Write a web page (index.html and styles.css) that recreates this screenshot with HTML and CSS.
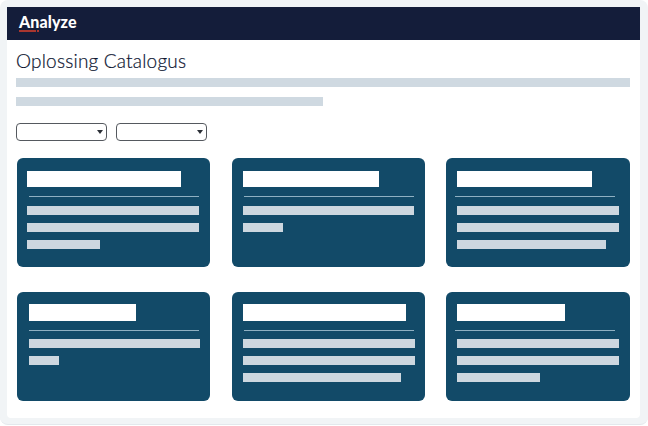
FILE: index.html
```html
<!DOCTYPE html>
<html>
<head>
    <title>Analyze - Oplossing Catalogus</title>
    <link rel="stylesheet" href="styles.css">
</head>
<body>
    <div class="frame">
        <div class="window">
            <div class="topbar">
                <div class="logo">Analyze</div>
                <div class="logo-mark"></div>
            </div>
            <div class="content">
                <h1>Oplossing Catalogus</h1>
                <div class="intro-bar"></div>
                <div class="intro-bar short"></div>
                <div class="filters">
                    <div class="select"></div>
                    <div class="select"></div>
                </div>
                <div class="cards">
                    <div class="card">
                        <div class="card-title" style="width: 154px"></div>
                        <div class="card-line"></div>
                        <div class="bar" style="width: 172px"></div>
                        <div class="bar" style="width: 172px"></div>
                        <div class="bar" style="width: 73px"></div>
                    </div>
                    <div class="card">
                        <div class="card-title" style="width: 136px"></div>
                        <div class="card-line"></div>
                        <div class="bar" style="width: 171px"></div>
                        <div class="bar" style="width: 40px"></div>
                    </div>
                    <div class="card">
                        <div class="card-title" style="width: 135px"></div>
                        <div class="card-line"></div>
                        <div class="bar" style="width: 162px"></div>
                        <div class="bar" style="width: 162px"></div>
                        <div class="bar" style="width: 149px"></div>
                    </div>
                    <div class="card">
                        <div class="card-title" style="width: 107px"></div>
                        <div class="card-line"></div>
                        <div class="bar" style="width: 171px"></div>
                        <div class="bar" style="width: 30px"></div>
                    </div>
                    <div class="card">
                        <div class="card-title" style="width: 163px"></div>
                        <div class="card-line"></div>
                        <div class="bar" style="width: 172px"></div>
                        <div class="bar" style="width: 172px"></div>
                        <div class="bar" style="width: 158px"></div>
                    </div>
                    <div class="card">
                        <div class="card-title" style="width: 108px"></div>
                        <div class="card-line"></div>
                        <div class="bar" style="width: 162px"></div>
                        <div class="bar" style="width: 162px"></div>
                        <div class="bar" style="width: 83px"></div>
                    </div>
                </div>
            </div>
        </div>
    </div>
</body>
</html>
```

FILE: styles.css
```css
body {
    margin: 0;
    background-color: white;
    font-family: "Lato", "Liberation Sans", sans-serif;
}
.frame {
    width: 648px;
    height: 425px;
    box-sizing: border-box;
    padding: 7px 8px 6px 7px;
    background-color: #f1f4f6;
    border-bottom: 1px solid #e3e8ec;
    border-radius: 8px;
}
.window {
    height: 100%;
    background-color: white;
    border-radius: 0 0 4px 4px;
    overflow: hidden;
}
.topbar {
    height: 33px;
    background-color: #141d3a;
    padding: 6px 0 0 12px;
    box-sizing: border-box;
}
.logo {
    color: white;
    font-size: 16px;
    font-weight: 900;
    letter-spacing: 0.1px;
    line-height: 17px;
}
.logo-mark {
    width: 20px;
    height: 2px;
    background: linear-gradient(to right, #a8362f 17px, transparent 17px, transparent 18px, #a8362f 18px);
}
.content {
    padding: 0 10px 0 9px;
}
h1 {
    margin: 0;
    padding-top: 8px;
    height: 30px;
    color: #0c1430;
    font-size: 19px;
    font-weight: 300;
    letter-spacing: 0.2px;
    line-height: 25px;
    -webkit-text-stroke: 0.2px #0c1430;
}
.intro-bar {
    height: 9px;
    margin-bottom: 10px;
    background-color: #cfd9e1;
    width: 614px;
}
.intro-bar.short {
    width: 307px;
}
.filters {
    display: flex;
    gap: 9px;
    margin-top: 17px;
}
.select {
    position: relative;
    width: 91px;
    height: 18px;
    box-sizing: border-box;
    border: 1px solid #55595f;
    border-radius: 4px;
}
.select::after {
    content: "";
    position: absolute;
    right: 3px;
    top: 6px;
    border-style: solid;
    border-width: 4px 3px 0 3px;
    border-color: #2b2f36 transparent transparent transparent;
}
.cards {
    display: grid;
    grid-template-columns: 215px 214px 184px;
    grid-auto-rows: 109px;
    row-gap: 25px;
    margin: 17px 0 0 1px;
}
.card {
    width: 193px;
    box-sizing: border-box;
    padding: 13px 0 0 11px;
    background-color: #124a68;
    border-radius: 6px;
}
.card:nth-child(3n) {
    width: 184px;
}
.card:nth-child(1) {
    padding-left: 10px;
}
.card:nth-child(4) {
    padding-left: 12px;
}
.card-title {
    height: 16px;
    background-color: white;
}
.card-line {
    width: 170px;
    height: 1px;
    margin: 9px 0 9px 1px;
    background-color: #8fb0c2;
}
.card:nth-child(1) .card-line {
    margin-left: 2px;
}
.card:nth-child(4) .card-line {
    margin-left: 0;
}
.card:nth-child(3n) .card-line {
    width: 160px;
    margin-left: -2px;
}
.card:nth-child(n+4) {
    padding-top: 12px;
}
.card:nth-child(n+4) .card-title {
    height: 17px;
}
.card:nth-child(n+4) .card-line {
    margin-bottom: 8px;
}
.bar {
    height: 9px;
    margin-bottom: 8px;
    background-color: #cdd7df;
}
```
